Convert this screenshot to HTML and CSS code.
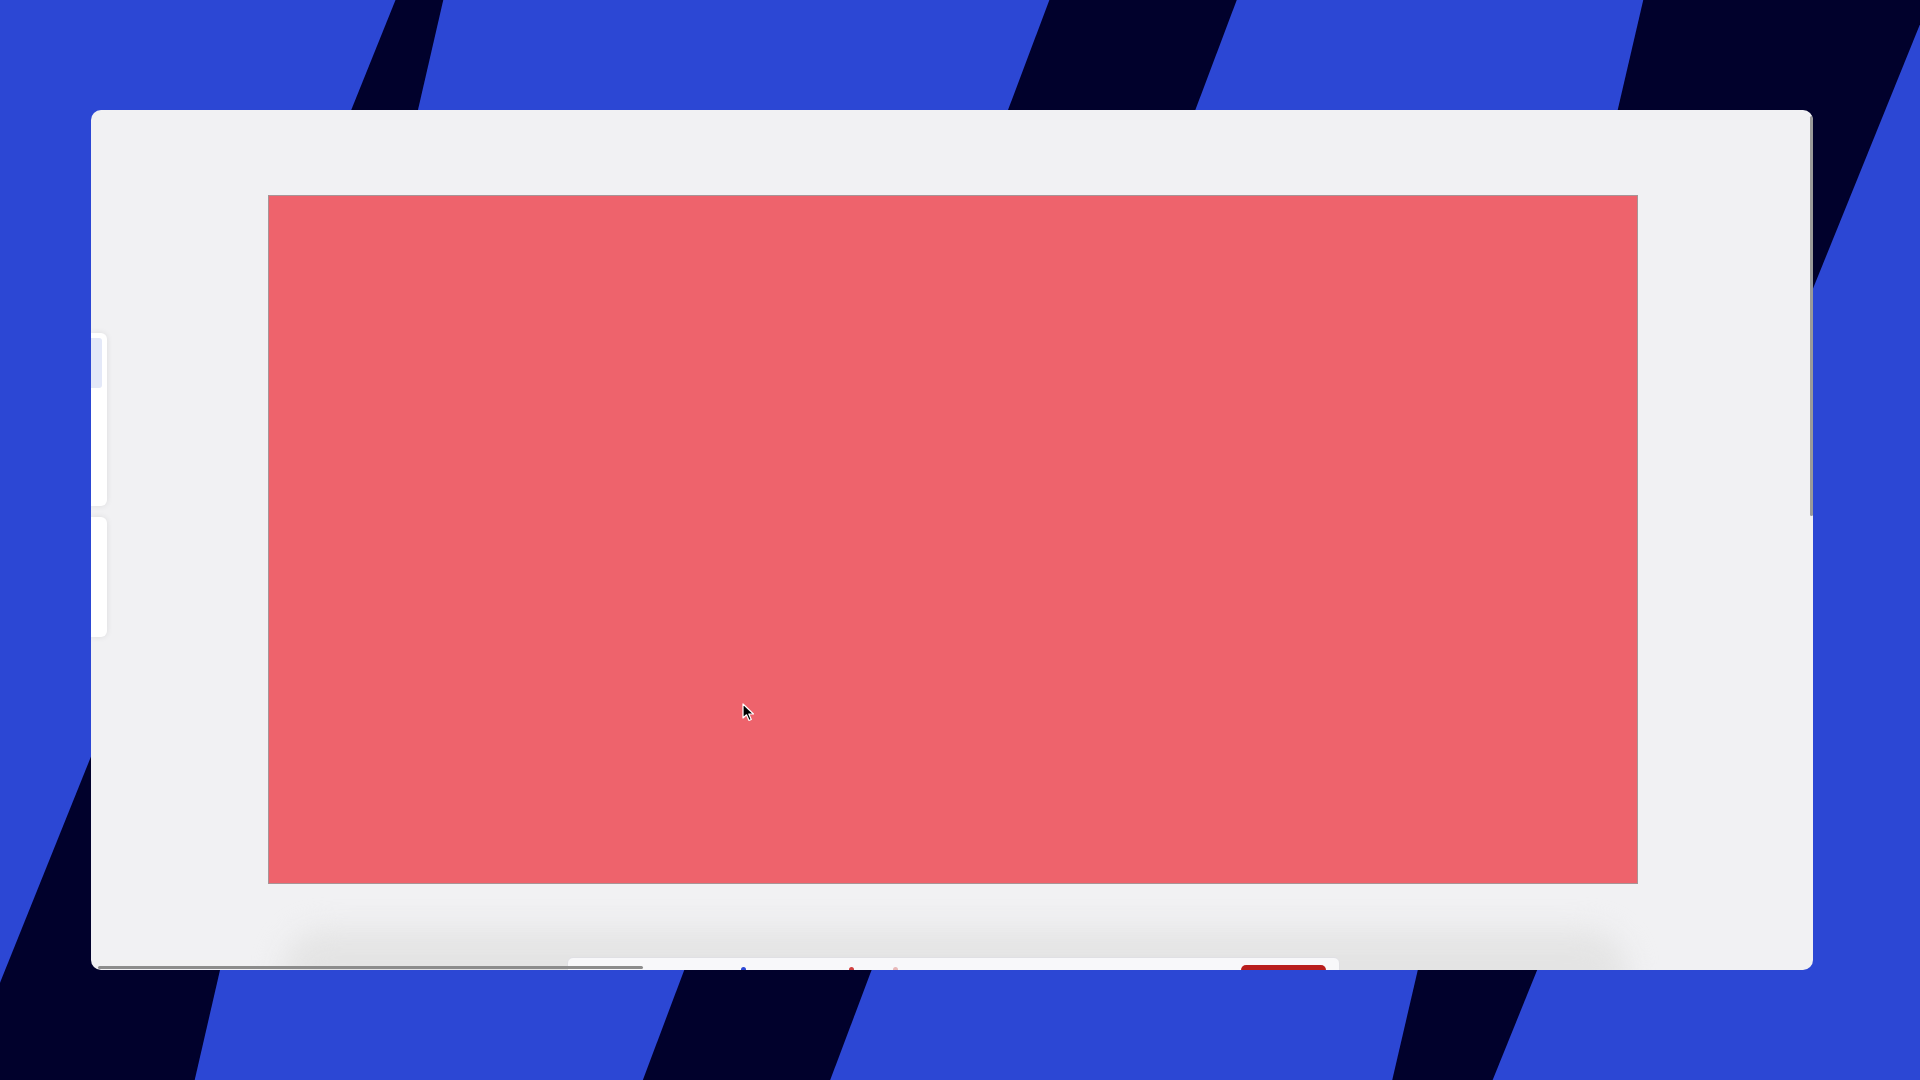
FILE: index.html
```html
<!DOCTYPE html>
<html lang="en">
<head>
  <meta charset="UTF-8">
  <meta name="viewport" content="width=device-width, initial-scale=1.0">
  <title>Preview</title>
  <link rel="stylesheet" href="styles.css">
</head>
<body>
  <svg class="backdrop" viewBox="0 0 1568 882" preserveAspectRatio="none">
    <rect width="1568" height="882" fill="#2c47d4"/>
    <polygon points="323,0 362,0 159,882 -32,882" fill="#01012c"/>
    <polygon points="857,0 1010,0 678,882 525,882" fill="#01012c"/>
    <polygon points="1342,0 1576,0 1219,882 1137,882" fill="#01012c"/>
  </svg>

  <div class="desktop">
    <div class="window">
      <div class="canvas"></div>

      <!-- side panels, mostly cut off -->
      <div class="side-card first"><div class="side-item"></div></div>
      <div class="side-card second"></div>

      <div class="dock-shadow"></div>
      <div class="toolbar">
        <span class="dot blue" style="left: 173px"></span>
        <span class="dot red" style="left: 281px"></span>
        <span class="dot pink" style="left: 325px"></span>
        <div class="record"></div>
      </div>

      <div class="scroll-x"></div>
      <div class="scroll-y"></div>

      <svg class="cursor" width="14" height="20" viewBox="0 0 14 20">
        <path d="M1 1 L1 15 L4.5 11.8 L7 17.5 L9.3 16.5 L6.8 11 L11.5 11 Z" fill="#000" stroke="#fff" stroke-width="1.2" stroke-linejoin="round"/>
      </svg>
    </div>
  </div>
</body>
</html>
```

FILE: styles.css
```css
body {
  margin: 0;
  width: 1920px;
  height: 1080px;
  overflow: hidden;
  position: relative;
  font-family: "Liberation Sans", Arial, sans-serif;
}

.backdrop {
  position: absolute;
  top: 0;
  left: 0;
  width: 1920px;
  height: 1080px;
}

.desktop {
  position: relative;
  padding: 110px 0 0 91px;
}

.window {
  position: relative;
  width: 1722px;
  height: 860px;
  background-color: #f1f1f3;
  border-radius: 10px;
  overflow: hidden;
  padding: 85px 0 0 177px;
  box-sizing: border-box;
}

.canvas {
  width: 1370px;
  height: 689px;
  background-color: #ee636c;
  border: 1px solid #a89496;
  box-sizing: border-box;
}

.side-card {
  position: absolute;
  left: 0;
  width: 16px;
  background-color: #fff;
  border-radius: 0 6px 6px 0;
  box-shadow: 0 0 6px rgba(0, 0, 0, 0.09);
}

.side-card.first {
  top: 223px;
  height: 173px;
}

.side-card.second {
  top: 407px;
  height: 120px;
}

.side-item {
  margin-top: 5px;
  width: 11px;
  height: 50px;
  background-color: #e3e8f8;
  border-radius: 0 3px 3px 0;
}

.dock-shadow {
  position: absolute;
  left: 191px;
  top: 820px;
  width: 1346px;
  height: 90px;
  border-radius: 60px;
  background-color: #e4e4e4;
  filter: blur(14px);
}

.toolbar {
  position: absolute;
  left: 476px;
  top: 847px;
  width: 771px;
  height: 40px;
  background-color: #f8f8fa;
  border: 1px solid #e0e0e4;
  border-radius: 6px;
}

.dot {
  position: absolute;
  top: 9px;
  width: 5px;
  height: 5px;
  border-radius: 50%;
}

.dot.blue { background-color: #2c47d4; }
.dot.red { background-color: #d04040; }
.dot.pink { background-color: #e8b8b8; }

.record {
  position: absolute;
  left: 673px;
  top: 7px;
  width: 85px;
  height: 24px;
  background-color: #b81d1d;
  border-radius: 5px;
}

.scroll-x {
  position: absolute;
  left: 7px;
  top: 856px;
  width: 545px;
  height: 3px;
  background-color: #8c8c8c;
  border-radius: 2px;
}

.scroll-y {
  position: absolute;
  left: 1719px;
  top: 6px;
  width: 3px;
  height: 400px;
  background-color: #9a9a9a;
  border-radius: 2px;
}

.cursor {
  position: absolute;
  left: 651px;
  top: 593px;
}
```
